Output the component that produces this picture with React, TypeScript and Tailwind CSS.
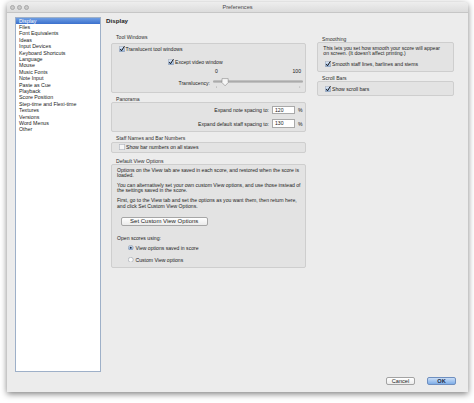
import type { ReactNode } from "react";

const LIST_ITEMS = [
  "Display",
  "Files",
  "Font Equivalents",
  "Ideas",
  "Input Devices",
  "Keyboard Shortcuts",
  "Language",
  "Mouse",
  "Music Fonts",
  "Note Input",
  "Paste as Cue",
  "Playback",
  "Score Position",
  "Step-time and Flexi-time",
  "Textures",
  "Versions",
  "Word Menus",
  "Other",
];

function Checkbox({ checked }: { checked?: boolean }) {
  return (
    <svg width="6" height="6" viewBox="0 0 12 12" className="shrink-0">
      <defs>
        <linearGradient id="cbFill" x1="0" y1="0" x2="0" y2="1">
          <stop offset="0" stopColor="#e6eefa" />
          <stop offset="1" stopColor="#8eb2df" />
        </linearGradient>
      </defs>
      <rect
        x="0.5"
        y="0.5"
        width="11"
        height="11"
        rx="2"
        fill={checked ? "url(#cbFill)" : "#f7f7f7"}
        stroke="#7d8797"
      />
      {checked && <path d="M2.6 6.2 L5 9.6 L10.8 0.6" fill="none" stroke="#141414" strokeWidth="2" />}
    </svg>
  );
}

function Radio({ checked }: { checked?: boolean }) {
  return (
    <svg width="5.5" height="5.5" viewBox="0 0 12 12" className="shrink-0">
      <defs>
        <linearGradient id="rbFill" x1="0" y1="0" x2="0" y2="1">
          <stop offset="0" stopColor="#dbe7f7" />
          <stop offset="1" stopColor="#86abdc" />
        </linearGradient>
      </defs>
      <circle cx="6" cy="6" r="5.4" fill={checked ? "url(#rbFill)" : "#f8f8f8"} stroke="#7f8896" strokeWidth="1" />
      {checked && <circle cx="6" cy="6" r="2" fill="#1d2a3d" />}
    </svg>
  );
}

function Slider() {
  return (
    <svg width="90" height="10" viewBox="0 0 90 10" className="shrink-0">
      <rect x="0" y="2.6" width="90" height="1.8" rx="0.9" fill="#9c9c9c" />
      <rect x="0" y="3.6" width="90" height="0.6" fill="#c4c4c4" />
      <path d="M9 0.6 H15.2 V4.6 L12.1 7.8 L9 4.6 Z" fill="#f6f6f6" stroke="#8a8a8a" strokeWidth="0.6" />
      <rect x="3" y="8.4" width="0.6" height="1.4" fill="#a0a0a0" />
      <rect x="86.5" y="8.4" width="0.6" height="1.4" fill="#a0a0a0" />
    </svg>
  );
}

function Group({
  title,
  className,
  boxClass,
  children,
}: {
  title: string;
  className?: string;
  boxClass: string;
  children: ReactNode;
}) {
  return (
    <div className={className}>
      <div className="h-[6px] leading-[6px] pl-[5px] text-[5.1px] text-[#2e2e2e]">{title}</div>
      <div className={`bg-[#e3e3e3] border border-[#cecece] rounded-[2px] ${boxClass}`}>{children}</div>
    </div>
  );
}

function SpacingRow({ label, value, className }: { label: string; value: string; className?: string }) {
  return (
    <div className={`flex items-center justify-end pr-[3px] h-[8.5px] ${className ?? ""}`}>
      <span className="text-[5.1px] leading-[6px]">{label}</span>
      <span className="ml-[3px] w-[23px] h-[8.5px] bg-white border border-[#a9a9a9] pl-[2px] text-[5.1px] leading-[6.5px]">
        {value}
      </span>
      <span className="ml-[3px] w-[4px] text-[5.1px] leading-[6px]">%</span>
    </div>
  );
}

export default function App() {
  return (
    <div className="w-[474px] h-[403px] bg-white overflow-hidden font-['Liberation_Sans',Arial,sans-serif] text-[#1b1b1b]">
      <div className="ml-[7px] mt-[2px] w-[461px] h-[390px] flex flex-col bg-[#ececec] rounded-t-[4px] shadow-[0_2px_6px_rgba(0,0,0,0.5)]">
        {/* title bar */}
        <div className="relative h-[11px] shrink-0 rounded-t-[4px] bg-[linear-gradient(to_bottom,#eeeeee,#dcdcdc)] border-b border-[#c6c6c6] flex items-center justify-center">
          <div className="absolute left-[3px] top-[3px] flex gap-[2px]">
            <span className="w-[5px] h-[5px] rounded-full bg-[#c9c9c9] border border-[#a9a9a9]" />
            <span className="w-[5px] h-[5px] rounded-full bg-[#c9c9c9] border border-[#a9a9a9]" />
            <span className="w-[5px] h-[5px] rounded-full bg-[#c9c9c9] border border-[#a9a9a9]" />
          </div>
          <span className="text-[5.6px] leading-[6px] text-[#4a4a4a]">Preferences</span>
        </div>

        <div className="flex flex-1 pl-[8px] pt-[3.5px]">
          {/* sidebar list */}
          <div className="w-[86px] h-[355px] shrink-0 bg-white border border-[#9eb0c8]">
            {LIST_ITEMS.map((item, i) => (
              <div
                key={item}
                className={
                  i === 0
                    ? "h-[6.41px] leading-[6.41px] pl-[3px] text-[5.3px] text-white bg-[linear-gradient(to_bottom,#6e9de2,#3b70cd)]"
                    : "h-[6.41px] leading-[6.41px] pl-[3px] text-[5.3px]"
                }
              >
                {item}
              </div>
            ))}
          </div>

          <div className="flex flex-col flex-1 ml-[5px]">
            <h1 className="h-[7px] leading-[7px] text-[6.2px] font-bold">Display</h1>

            <div className="flex mt-[10px] pl-[5px]">
              {/* left column */}
              <div className="w-[195px] flex flex-col">
                <Group title="Tool Windows" boxClass="mt-[3.2px] h-[50px] pt-[2.3px]">
                  <div className="flex items-center h-[6px] pl-[6.5px] gap-[1px]">
                    <Checkbox checked />
                    <span className="text-[5.1px] leading-[6px]">Translucent tool windows</span>
                  </div>
                  <div className="flex items-center h-[6px] mt-[6.7px] pl-[56px] gap-[1px]">
                    <Checkbox checked />
                    <span className="text-[5.1px] leading-[6px]">Except video window</span>
                  </div>
                  <div className="flex justify-between w-[90px] ml-[101px] mt-[4.8px] px-[2px] h-[5px] text-[5.1px] leading-[5px]">
                    <span>0</span>
                    <span>100</span>
                  </div>
                  <div className="flex items-center mt-[5px] h-[8px]">
                    <span className="w-[98px] text-right text-[5.1px] leading-[6px]">Translucency:</span>
                    <span className="ml-[3px] flex items-center">
                      <Slider />
                    </span>
                  </div>
                </Group>

                <Group title="Panorama" className="mt-[3.3px]" boxClass="mt-[0.3px] h-[29.7px] pt-[2.5px]">
                  <SpacingRow label="Expand note spacing to:" value="120" />
                  <SpacingRow label="Expand default staff spacing to:" value="130" className="mt-[5px]" />
                </Group>

                <Group
                  title="Staff Names and Bar Numbers"
                  className="mt-[2.7px]"
                  boxClass="mt-[1px] h-[11.3px] flex items-center pl-[7px] gap-[1px]"
                >
                  <Checkbox />
                  <span className="text-[5.1px] leading-[6px]">Show bar numbers on all staves</span>
                </Group>

                <Group title="Default View Options" className="mt-[5px]" boxClass="h-[103.7px] pl-[5px] pt-[3px]">
                  <p className="text-[5.1px] leading-[5.4px] whitespace-nowrap">
                    Options on the View tab are saved in each score, and restored when the score is
                    <br />
                    loaded.
                  </p>
                  <p className="mt-[4.3px] text-[5.1px] leading-[5.4px] whitespace-nowrap">
                    You can alternatively set your own custom View options, and use those instead of
                    <br />
                    the settings saved in the score.
                  </p>
                  <p className="mt-[4.3px] text-[5.1px] leading-[5.4px] whitespace-nowrap">
                    First, go to the View tab and set the options as you want them, then return here,
                    <br />
                    and click Set Custom View Options.
                  </p>
                  <button className="mt-[8.3px] ml-[3.7px] w-[87px] h-[8.3px] flex items-center justify-center rounded-[2px] border border-[#a6a6a6] bg-[linear-gradient(to_bottom,#ffffff,#ebebeb)] text-[6px] leading-[6px]">
                    Set Custom View Options
                  </button>
                  <div className="mt-[10px] h-[5.4px] text-[5.1px] leading-[5.4px]">Open scores using:</div>
                  <div className="flex items-center gap-[2px] h-[6px] mt-[3.6px] pl-[11px]">
                    <Radio checked />
                    <span className="text-[5.1px] leading-[6px]">View options saved in score</span>
                  </div>
                  <div className="flex items-center gap-[2px] h-[6px] mt-[6px] pl-[11px]">
                    <Radio />
                    <span className="text-[5.1px] leading-[6px]">Custom View options</span>
                  </div>
                </Group>
              </div>

              {/* right column */}
              <div className="w-[137px] ml-[11px] mt-[2.5px] flex flex-col">
                <Group title="Smoothing" boxClass="h-[30px] pt-[2.8px] pl-[5.3px]">
                  <p className="text-[5.1px] leading-[5px] whitespace-nowrap">
                    This lets you set how smooth your score will appear
                    <br />
                    on screen. (It doesn&apos;t affect printing.)
                  </p>
                  <div className="flex items-center gap-[1px] h-[6px] mt-[5.5px] pl-[1.7px]">
                    <Checkbox checked />
                    <span className="text-[5.1px] leading-[6px]">Smooth staff lines, barlines and stems</span>
                  </div>
                </Group>
                <Group
                  title="Scroll Bars"
                  className="mt-[3px]"
                  boxClass="h-[15px] flex items-center pl-[7px] gap-[1px]"
                >
                  <Checkbox checked />
                  <span className="text-[5.1px] leading-[6px]">Show scroll bars</span>
                </Group>
              </div>
            </div>

            {/* dialog buttons */}
            <div className="mt-auto flex justify-end gap-[12px] pr-[12px] pb-[7px]">
              <button className="w-[29px] h-[8px] flex items-center justify-center rounded-[2px] border border-[#a3a3a3] bg-[linear-gradient(to_bottom,#ffffff,#ececec)] text-[5.6px] leading-[6px]">
                Cancel
              </button>
              <button className="w-[29px] h-[8px] flex items-center justify-center rounded-[2px] border border-[#6f8fbf] bg-[linear-gradient(to_bottom,#c9ddf6,#7faee8)] text-[5.6px] leading-[6px] font-bold text-[#1c2a44]">
                OK
              </button>
            </div>
          </div>
        </div>
      </div>
    </div>
  );
}
